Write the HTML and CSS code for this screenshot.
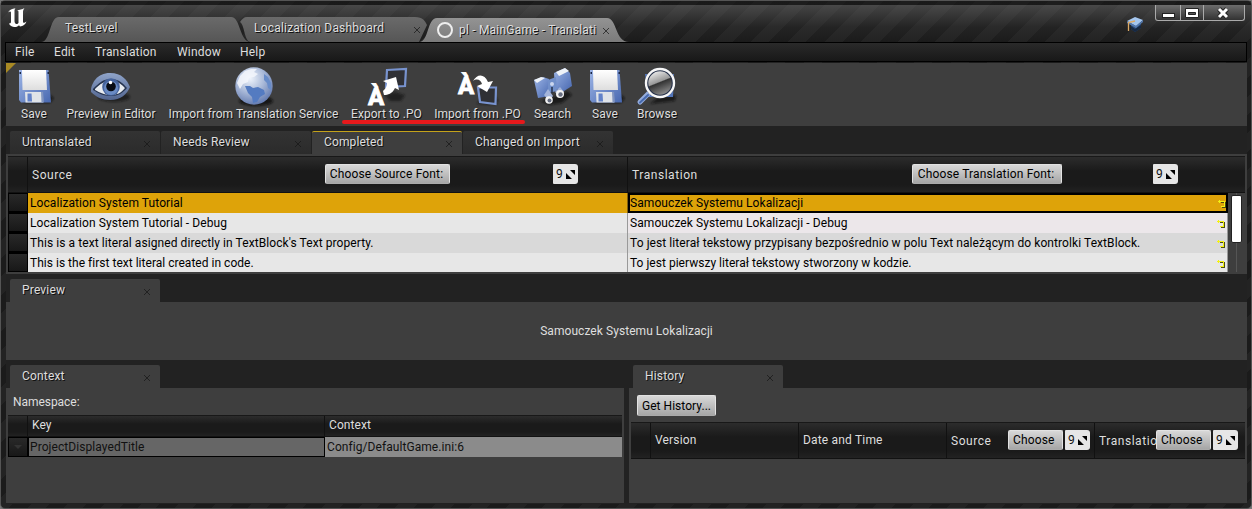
FILE: index.html
```
<!DOCTYPE html>
<html lang="en">
<head>
<meta charset="utf-8">
<title>Translation Editor</title>
<link rel="stylesheet" href="styles.css">
</head>
<body>
<svg class="defs" width="0" height="0">
  <defs>
    <linearGradient id="blue" x1="0" y1="0" x2="1" y2="1"><stop offset="0" stop-color="#9db5e6"/><stop offset="1" stop-color="#4868b0"/></linearGradient>
    <linearGradient id="paper" x1="0" y1="0" x2="0" y2="1"><stop offset="0" stop-color="#fff"/><stop offset="1" stop-color="#dedede"/></linearGradient>
    <linearGradient id="lid" x1="0" y1="0" x2="0" y2="1"><stop offset="0" stop-color="#8fa4ca"/><stop offset="1" stop-color="#52658f"/></linearGradient>
    <radialGradient id="ocean" cx=".4" cy=".3" r=".75"><stop offset="0" stop-color="#eef3fb"/><stop offset=".5" stop-color="#a9b9d8"/><stop offset="1" stop-color="#5d75ac"/></radialGradient>
    <linearGradient id="glass" x1=".2" y1="0" x2=".6" y2="1"><stop offset="0" stop-color="#fff"/><stop offset=".48" stop-color="#999"/><stop offset=".52" stop-color="#333"/><stop offset="1" stop-color="#999"/></linearGradient>
    <filter id="soft" x="-30%" y="-30%" width="160%" height="160%"><feGaussianBlur stdDeviation="1"/></filter>
    <symbol id="i-save" viewBox="0 0 42 42">
      <path d="M9 38 37 38 41 33 36 29z" fill="#111" opacity=".7" filter="url(#soft)"/>
      <path d="M6 5H35.500L38 37.500H8L6 35z" fill="url(#blue)"/>
      <path d="M9 5H33L34 25H9.500z" fill="url(#paper)"/>
      <path d="M12 27H29L30 37.500H12.500z" fill="#dfe3e8"/>
      <path d="M14.500 28.500H18.500L19 36.500H14.500z" fill="#6282c9"/>
      <path d="M28 27H30L31 37.500H28.500z" fill="#8094bf"/>
      <path d="M6.500 7h1.500v2H6.500zM34.500 7H36v2h-1.500z" fill="#1b2745"/>
    </symbol>
    <symbol id="i-turn" viewBox="0 0 9 9">
      <path d="M3 3h3v1H3zM4 8h4v1H4zM7 3h1v5H7z" fill="#4a4a10"/>
      <path d="M0 2h7v1H0zM1 1h1v3H1zM6 2h1v6H6zM3 7h4v1H3z" fill="#f4f214"/>
    </symbol>
  </defs>
</svg>
<div class="window">
  <header class="title">
    <svg class="logo" width="22" height="22" viewBox="0 0 22 22"><path d="M1 5.500C2.500 2.500 5 1.500 8.500 1.200 7.500 2.400 7.500 3 7.500 4V14C7.500 16 8.500 17 9.500 17 10.500 17 11 16.500 11.500 16V5C11.500 4 11 3.500 10 3.300 12.500 3 15 2.500 17.500 1 16.500 2.500 16 3.500 16 5V14.500C16 16 17 16.500 19.500 14.500 18.500 17.500 16 19 13 19.600L12 18.200C11 19.200 9.500 20 8 20 5.500 20 2.500 18.700 2.200 16.200 3.700 16.400 4 16 4 14.500V5.500C4 4 2.500 4 1 5.500z" fill="#fff"/></svg>
    <div class="wtab first"><span class="lbl">TestLevel</span></div>
    <div class="wtab second"><span class="lbl">Localization Dashboard</span><i class="x"></i></div>
    <div class="wtab active"><i class="ring"></i><span class="lbl">pl - MainGame - Translati</span><i class="x"></i></div>
    <svg class="cap" width="18" height="17" viewBox="0 0 18 17"><path d="M5 7V13L9 16 15 12V7z" fill="#2b4a75"/><path d="M5 10 9 13 15 9V12L9 16 5 13z" fill="#172841"/><path d="M1 5 9 1 17 4 10 10z" fill="#a5c6ee"/><path d="M1 5 10 10 17 4V6L10 12 1 7z" fill="#5479ae"/><path d="M9 5 2.500 6.500V15" stroke="#dba966" stroke-width="1.300" fill="none"/></svg>
    <div class="winbtns">
      <span class="wb min"><svg width="25" height="15"><rect x="6.500" y="8.500" width="12" height="4" fill="#fff" stroke="#222"/></svg></span>
      <span class="wb max"><svg width="23" height="15"><path d="M4.500 3.500h13v9h-13z" fill="#fff" stroke="#222"/><path d="M7.500 7.500h7v2h-7z" fill="#555" stroke="#222"/></svg></span>
      <span class="wb close"><svg width="41" height="15"><path d="M15 4 23 12M23 4 15 12" stroke="#222" stroke-width="5"/><path d="M15 4 23 12M23 4 15 12" stroke="#fff" stroke-width="3"/></svg></span>
    </div>
  </header>

  <nav class="menu"><span class="m1">File</span><span class="m2">Edit</span><span class="m3">Translation</span><span class="m4">Window</span><span>Help</span></nav>

  <main class="body">
    <section class="toolbar">
      <div class="tool t1"><svg width="42" height="42"><use href="#i-save"/></svg><span>Save</span></div>
      <div class="tool t2"><svg width="42" height="42" viewBox="0 0 42 42">
        <ellipse cx="24" cy="32" rx="16" ry="5" fill="#111" opacity=".6" filter="url(#soft)"/>
        <path d="M1 24C2 18 7 8 20 8 32 8 37 15 40 22 37 29 31 35 20 35 12 35 6 32 1 27z" fill="url(#lid)"/>
        <path d="M3 24C9 18 13 14 21 14 30 14 34 20 37 23 33 28 28 31 21 31 13 31 8 28 3 25z" fill="#26344f"/>
        <path d="M5 24C10 19 14 16 21 16 29 16 33 21 35 23 31 28 27 30 21 30 14 30 9 27 5 25z" fill="#e7ebef"/>
        <circle cx="21" cy="22" r="8.800" fill="#45639c"/><circle cx="21" cy="23" r="7" fill="#6a8bc4"/><circle cx="21" cy="21.500" r="4.800" fill="#080c14"/><circle cx="20.500" cy="17.500" r="1.800" fill="#fff"/>
      </svg><span>Preview in Editor</span></div>
      <div class="tool t3"><svg width="42" height="42" viewBox="0 0 42 42">
        <ellipse cx="23" cy="36" rx="17" ry="5" fill="#0a0a0a" opacity=".8" filter="url(#soft)"/>
        <circle cx="21" cy="21" r="18.700" fill="url(#ocean)"/>
        <path d="M7 11 12 6 18 4 24 4 21 7 25 9 21 12 16 13 15 17 10 19 7 24 4 18z" fill="#f3f6fc" opacity=".85"/>
        <path d="M12 21 17 21 20 23 25 22 31 25 32 29 27 32 24 37 20 38 19 32 15 28z" fill="#547bc1"/>
        <path d="M31 9 35 12 38 18 38 25 35 23 34 18 31 15z" fill="#688cc9"/>
      </svg><span>Import from Translation Service</span></div>
      <div class="tool t4"><svg width="42" height="42" viewBox="0 0 42 42">
        <path d="M19 30 29 27 39 30 35 36 24 36z" fill="#171717" opacity=".7" filter="url(#soft)"/>
        <path d="M21 5 40 4 39 21 20 22z" fill="#2f3035" stroke="#7893cf" stroke-width="2.200"/>
        <path d="M17 26C20 23 21 21 21 18L17 16 30 12 33 25 29 23C26 29 22 30 18 30z" fill="#fff"/>
        <text class="glyph" x="2" y="40" font-size="24">À</text>
      </svg><span>Export to .PO</span></div>
      <div class="tool t5"><svg width="42" height="42" viewBox="0 0 42 42">
        <path d="M20 39 26 29 35 27 41 35 39 40z" fill="#171717" opacity=".7" filter="url(#soft)"/>
        <path d="M21 22.500 39 22.500 38.500 39 23 37z" fill="#2f3035" stroke="#7893cf" stroke-width="2.200"/>
        <path d="M16 16C20 9 27 8 31 17L36 16 30 27 20 21 25 19C24 15 20 13 16 16z" fill="#fff"/>
        <text class="glyph" x="1" y="28.500" font-size="24">À</text>
      </svg><span>Import from .PO</span></div>
      <div class="tool t6"><svg width="42" height="42" viewBox="0 0 42 42">
        <path d="M8 36 24 31 36 26 40 30 30 38 18 40z" fill="#111" opacity=".7" filter="url(#soft)"/>
        <path d="M2 15 11 12 17 14 18 31 6 33z" fill="url(#blue)"/><path d="M22 8 33 3 38 8 40 21 32 26 23 24z" fill="url(#blue)"/>
        <path d="M16 15 24 12 25 26 16 28z" fill="#718fc9"/>
        <path d="M2 15 9 12 13 13 5 18z" fill="#eef2f8"/><path d="M24 7 33 3 37 6 27 11z" fill="#eef2f8"/>
        <path d="M12 30 16 24 21 31 17 36z" fill="#a3b4da"/><path d="M23 27 28 22 32 27 28 32z" fill="#a3b4da"/>
        <circle cx="17" cy="35" r="3.800" fill="#f3f3f3"/><circle cx="17.500" cy="35.500" r="2" fill="#666d80"/><circle cx="28" cy="29" r="4" fill="#f3f3f3"/><circle cx="28.500" cy="29.500" r="2.200" fill="#666d80"/>
        <circle cx="20" cy="19" r="2" fill="#cbd6ee"/><path d="M20 22V28" stroke="#25304a" stroke-width="1.500"/>
      </svg><span>Search</span></div>
      <div class="tool t7"><svg width="42" height="42"><use href="#i-save"/></svg><span>Save</span></div>
      <div class="tool t8"><svg width="42" height="42" viewBox="0 0 42 42">
        <path d="M14 39 22 32 40 30 39 36z" fill="#111" opacity=".7" filter="url(#soft)"/>
        <path d="M9 9H38L37 32H12z" fill="#5275ba"/>
        <path d="M13 28 4 37" stroke="#94acdc" stroke-width="5" stroke-linecap="round"/><path d="M12 30 4 37.500" stroke="#4669ae" stroke-width="2" stroke-linecap="round"/>
        <circle cx="24" cy="18" r="13.500" fill="url(#glass)" stroke="#27324b" stroke-width="3.600"/><circle cx="24" cy="18" r="14" fill="none" stroke="#f7f7f7" stroke-width="2.400"/>
      </svg><span>Browse</span></div>
      <i class="corner"></i><i class="redline"></i>
    </section>

    <div class="tabs main-tabs"><div class="tab"><span>Untranslated</span><i class="x"></i></div><div class="tab"><span>Needs Review</span><i class="x"></i></div><div class="tab on"><span>Completed</span><i class="x"></i></div><div class="tab"><span>Changed on Import</span><i class="x"></i></div></div>
    <section class="panel entries">
      <div class="thead"><div class="gut"></div>
        <div class="hcol src"><span class="hl">Source</span><button class="btn b125">Choose Source Font:</button><span class="spin">9<svg width="9" height="9"><path d="M0 3V9H6zM4 0H9V5z"/></svg></span></div>
        <div class="hcol tra"><span class="hl">Translation</span><button class="btn b150">Choose Translation Font:</button><span class="spin">9<svg width="9" height="9"><path d="M0 3V9H6zM4 0H9V5z"/></svg></span></div>
      </div>
      <div class="list">
        <div class="rows">
          <div class="row sel"><i class="handle"></i><span class="cell">Localization System Tutorial</span><span class="cell focus">Samouczek Systemu Lokalizacji<svg width="9" height="9"><use href="#i-turn"/></svg></span></div>
          <div class="row"><i class="handle"></i><span class="cell">Localization System Tutorial - Debug</span><span class="cell pink">Samouczek Systemu Lokalizacji - Debug<svg width="9" height="9"><use href="#i-turn"/></svg></span></div>
          <div class="row alt"><i class="handle"></i><span class="cell">This is a text literal asigned directly in TextBlock's Text property.</span><span class="cell">To jest literał tekstowy przypisany bezpośrednio w polu Text należącym do kontrolki TextBlock.<svg width="9" height="9"><use href="#i-turn"/></svg></span></div>
          <div class="row last"><i class="handle"></i><span class="cell">This is the first text literal created in code.</span><span class="cell">To jest pierwszy literał tekstowy stworzony w kodzie.<svg width="9" height="9"><use href="#i-turn"/></svg></span></div>
        </div>
        <div class="scroll"><i class="thumb"></i></div>
      </div>
    </section>

    <div class="tabs"><div class="tab lit"><span>Preview</span><i class="x"></i></div></div>
    <section class="panel preview">Samouczek Systemu Lokalizacji</section>

    <div class="split">
      <div class="left">
        <div class="tabs"><div class="tab lit"><span>Context</span><i class="x"></i></div></div>
        <section class="panel context">
          <div class="ns">Namespace:</div>
          <div class="thead small"><div class="gut"></div><div class="hcol key">Key</div><div class="hcol">Context</div></div>
          <div class="crow"><i class="handle"><b></b></i><span class="k">ProjectDisplayedTitle</span><span class="v">Config/DefaultGame.ini:6</span></div>
        </section>
      </div>
      <div class="right">
        <div class="tabs"><div class="tab lit"><span>History</span><i class="x"></i></div></div>
        <section class="panel history">
          <button class="btn gh">Get History...</button>
          <div class="thead hist"><div class="gut"></div><div class="hcol c148">Version</div><div class="hcol c148">Date and Time</div>
            <div class="hcol c148 hs"><span class="hl">Source</span><button class="btn b55">Choose</button><span class="spin">9<svg width="9" height="9"><path d="M0 3V9H6zM4 0H9V5z"/></svg></span></div>
            <div class="hcol c150 hs"><span class="hl">Translation</span><button class="btn b55">Choose</button><span class="spin">9<svg width="9" height="9"><path d="M0 3V9H6zM4 0H9V5z"/></svg></span></div>
          </div>
        </section>
      </div>
    </div>
  </main>
</div>
</body>
</html>
```
FILE: styles.css
```
* { box-sizing: border-box; }
body { margin: 0; font: 12px/14px Roboto, "Liberation Sans", sans-serif; letter-spacing: .18px; color: #dedede; background: #777; overflow: hidden; }
.defs { position: absolute; }
.window { width: 1252px; height: 509px; padding: 0 4px; border: 1px solid #555; border-radius: 5px; background: repeating-linear-gradient(135deg, #1b1b1b 0 13px, #232323 13px 26px); }
.title { height: 41px; margin: 0 -4px; padding-left: 5px; display: flex; align-items: flex-end; background: linear-gradient(rgba(25,25,25,.6) 0 4px, rgba(110,110,110,.5) 4px, rgba(70,70,70,.2) 26px, transparent 41px); }
.logo { align-self: flex-start; margin: 6px 10px 0 1px; width: 22px; flex: none; }
.wtab { height: 25px; display: flex; align-items: center; background: linear-gradient(#6a6a6a, #565656); flex: none; text-shadow: 1px 1px 0 #111; }
.wtab .lbl { white-space: nowrap; letter-spacing: .2px; }
.first { width: 210px; margin-left: 2px; padding: 0 0 3px 24px; clip-path: path("M0 25C10 25 8 0 18 0H190C200 0 198 25 210 25z"); }
.second { width: 194px; margin-left: -12px; padding: 0 0 3px 15px; clip-path: path("M12 25C5 25 6 8 1 5 3 2 5 0 8 0H176C184 0 186 4 188 8L180 25z"); }
.second .x { margin: 3px 0 0 30px; }
.active { height: 24px; width: 210px; margin-left: -14px; padding: 0 0 1px 18px; background: linear-gradient(#939393, #7b7b7b); clip-path: path("M0 24C10 24 8 0 18 0H188C198 0 196 24 210 24z"); }
.active .x { margin: 2px 0 0 7px; }
.ring { width: 16px; height: 16px; border: 2.500px solid #eee; border-radius: 50%; margin-right: 6px; flex: none; }
.x { display: inline-block; width: 6px; height: 6px; flex: none; background: linear-gradient(45deg, transparent 44%, #161616 44% 56%, transparent 56%), linear-gradient(-45deg, transparent 44%, #161616 44% 56%, transparent 56%); opacity: .7; }
.cap { margin: 0 11px 9px auto; }
.winbtns { display: flex; align-self: flex-start; height: 16px; margin: 4px 6px 0 0; }
.wb { height: 16px; border: 1px solid #aaa; border-top: 0; background: linear-gradient(#6d6d6d, #323232); margin-right: -1px; overflow: hidden; }
.wb svg { display: block; }
.min { width: 26px; border-radius: 0 0 0 3px; }
.max { width: 24px; }
.close { width: 42px; border-radius: 0 0 3px 0; margin: 0; }
.menu { height: 20px; border: 1px solid #000; background: linear-gradient(#2a2a2a, #181818); display: flex; padding: 2px 0 0 9px; }
.menu span { display: block; }
.m1 { width: 39px; }
.m2 { width: 41px; }
.m3 { width: 82px; }
.m4 { width: 63px; }
.body { margin: 1px 0 0 1px; width: 1241px; height: 441px; background: #222; }
.toolbar { height: 63px; background: #3e3e3e; position: relative; display: flex; padding-left: 2px; text-shadow: 1px 1px 0 #111; letter-spacing: .04px; }
.tool { display: flex; flex-direction: column; align-items: center; padding-top: 2px; flex: none; }
.tool svg { display: block; overflow: visible; }
.tool span { white-space: nowrap; }
.t1 { width: 52px; }
.t2 { width: 102px; }
.t3 { width: 183px; }
.t4 { width: 83px; }
.t5 { width: 99px; }
.t6 { width: 51px; }
.t7 { width: 54px; }
.t8 { width: 50px; }
.glyph { font-family: Roboto, sans-serif; font-weight: 800; fill: #fff; stroke: #fff; stroke-width: .8px; letter-spacing: 0; text-shadow: none; }
.corner { position: absolute; left: 0; top: 0; border-top: 10px solid #a98a24; border-right: 10px solid transparent; }
.redline { position: absolute; left: 336px; top: 57px; width: 183px; height: 4px; border-radius: 2px; background: #e6191c; }
.tabs { display: flex; height: 28px; padding: 5px 0 0 4px; background: #222; gap: 1px; }
.tab { width: 150px; height: 23px; padding: 0 10px 0 12px; display: flex; align-items: center; justify-content: space-between; background: linear-gradient(#333, #2b2b2b); border-radius: 2px 2px 0 0; text-shadow: 1px 1px 0 #111; }
.tab span { margin-top: -1px; }
.tab .x { margin-top: 2px; }
.tab.on { background: #3e3e3e; border-top: 1px solid #c4a21a; padding-bottom: 1px; }
.tab.lit { background: #3e3e3e; }
.main-tabs { letter-spacing: .13px; }
.panel { background: #3e3e3e; overflow: hidden; }
.entries { height: 120px; padding: 2px; }
.thead { display: flex; height: 37px; background: linear-gradient(#2c2c2c, #1a1a1a 40%, #1a1a1a 80%, #222); border-top: 1px solid #181818; border-bottom: 1px solid #121212; }
.gut { width: 20px; border-right: 1px solid #111; flex: none; }
.hcol { display: flex; align-items: center; border-right: 1px solid #111; padding: 0 0 1px 4px; white-space: nowrap; flex: none; }
.hcol:last-child { border: 0; }
.src, .tra { width: 600px; }
.hl { letter-spacing: .55px; padding-top: 1px; }
.src .hl { width: 293px; }
.tra .hl { width: 280px; }
.btn { font: inherit; letter-spacing: .15px; color: #000; height: 20px; padding: 0 2px 0 0; border: 1px solid #e2e2e2; border-bottom-color: #aaa; border-radius: 2px; background: linear-gradient(#d8d8d8, #a6a6a6); overflow: hidden; flex: none; }
.b125 { width: 125px; margin-right: 103px; }
.b150 { width: 150px; margin-right: 91px; }
.b55 { width: 55px; margin-right: 2px; padding-left: 4px; text-align: left; }
.spin { width: 25px; height: 20px; padding-left: 3px; background: #e6e6e6; color: #111; border-radius: 1px 3px 3px 1px; display: flex; align-items: center; gap: 3px; letter-spacing: 0; flex: none; }
.spin svg { margin-top: 1px; }
.list { display: flex; height: 79px; }
.rows { width: 1220px; overflow: hidden; flex: none; }
.row { display: flex; height: 20px; background: #e7e7e7; color: #000; letter-spacing: .08px; }
.alt { background: #d9d9d9; }
.sel { background: #dea309; }
.last { letter-spacing: .02px; }
.handle { width: 20px; border: 1px solid #000; border-bottom-width: 2px; background: linear-gradient(#292929, #181818); flex: none; }
.cell { width: 600px; padding: 3px 2px; border-right: 1px solid #999; white-space: nowrap; display: flex; justify-content: space-between; align-items: center; flex: none; }
.cell svg { margin: 1px -1px 0 0; }
.sel .cell { border-right-color: #806010; }
.row .focus { border: 2px solid #000; padding: 1px 0; }
.pink { background: #ece7ea; }
.scroll { width: 17px; padding: 2px 3px; background: linear-gradient(90deg, transparent 8px, #555 8px 9px, transparent 9px); }
.thumb { display: block; width: 11px; height: 48px; background: #fff; border: 1px solid #222; border-radius: 2px; }
.preview { height: 58px; display: flex; align-items: center; justify-content: center; letter-spacing: .06px; }
.split { display: flex; justify-content: space-between; height: 143px; }
.left, .right { width: 618px; }
.context, .history { height: 115px; padding: 0 2px; }
.context { letter-spacing: .07px; }
.ns { height: 27px; padding: 7px 0 0 5px; letter-spacing: -.05px; }
.small { height: 22px; }
.small .hcol { padding-bottom: 2px; }
.key { width: 297px; }
.crow { display: flex; height: 20px; color: #111; }
.crow .handle { width: 20px; border-bottom-width: 1px; padding: 7px 5px; }
.handle b { display: block; width: 0; border: 4px solid transparent; border-top-color: #333; }
.k { width: 297px; background: #666; border: 1px solid #000; padding: 2px 1px; }
.v { flex: 1; background: #8b8b8b; padding: 3px 2px; }
.history { display: flex; flex-direction: column; align-items: flex-start; }
.gh { width: 79px; height: 21px; margin: 7px 0 6px 6px; padding: 1px 0 0; letter-spacing: .05px; }
.hist { width: 614px; }
.c148 { width: 148px; }
.c150 { width: 149px; }
.hs .hl { width: 57px; overflow: hidden; }
```
